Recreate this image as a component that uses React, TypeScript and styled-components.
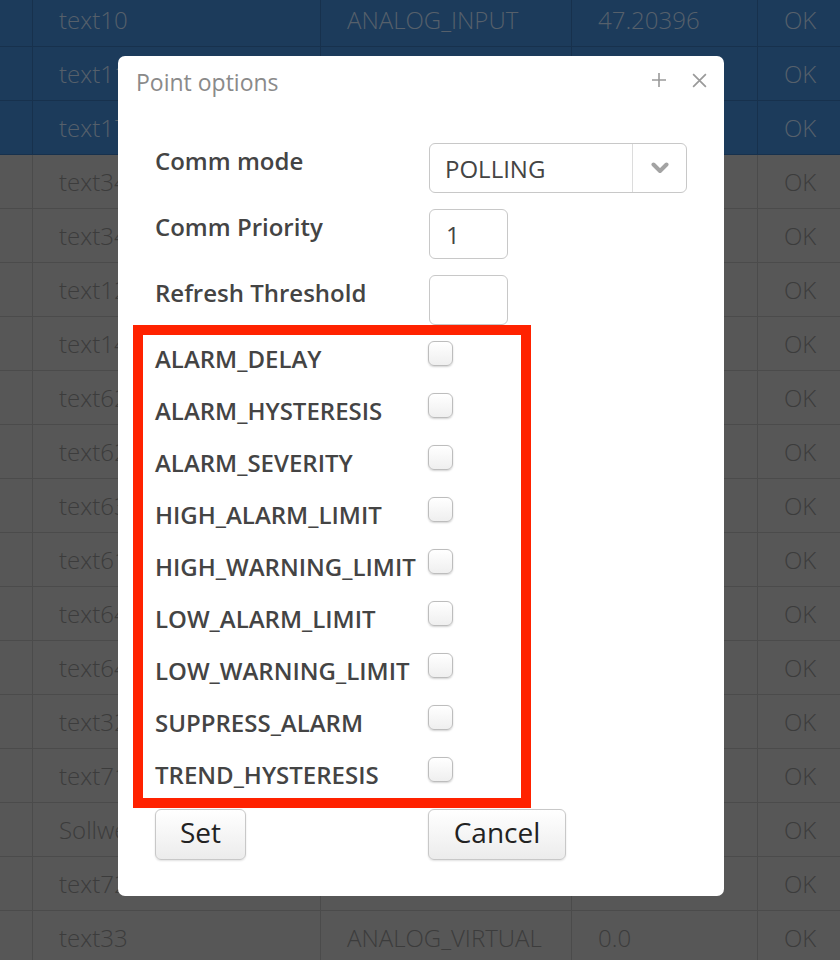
import React from "react";
import styled, { createGlobalStyle } from "styled-components";

const Global = createGlobalStyle`
  html, body { margin: 0; padding: 0; }
  body { width: 840px; height: 960px; overflow: hidden; font-family: "Open Sans", "Liberation Sans", sans-serif; background: #575757; }
`;

const Page = styled.div`
  position: relative;
  width: 840px;
  height: 960px;
  overflow: hidden;
`;

const Table = styled.div`
  display: flex;
  flex-direction: column;
  margin-top: -7px;
`;

const Row = styled.div<{ $sel?: boolean }>`
  display: grid;
  grid-template-columns: 33px 288px 251px 186px 1fr;
  height: 54px;
  background: ${(p) => (p.$sel ? "#1c3b5b" : "#575757")};
  border-bottom: 1px solid ${(p) => (p.$sel ? "#17314d" : "#4b4b4b")};
  box-sizing: border-box;
  color: ${(p) => (p.$sel ? "#56606b" : "#3c3c3c")};
`;

const Cell = styled.div<{ $sel?: boolean }>`
  display: flex;
  align-items: center;
  padding-left: 26px;
  border-right: 1px solid ${(p) => (p.$sel ? "#17314d" : "#4b4b4b")};
  font-size: 24px;
  font-weight: 300;
  white-space: nowrap;
  overflow: hidden;
  &:first-child { padding-left: 0; }
  &:last-child { border-right: none; }
`;

const Dialog = styled.div`
  position: absolute;
  left: 118px;
  top: 56px;
  width: 606px;
  height: 840px;
  background: #fff;
  border-radius: 7px;
  display: flex;
  flex-direction: column;
  box-sizing: border-box;
`;

const TitleBar = styled.div`
  display: flex;
  align-items: center;
  justify-content: space-between;
  height: 52px;
  padding: 0 16px 0 18px;
`;

const Title = styled.div`
  font-size: 23px;
  color: #8a8a8a;
  font-weight: 400;
`;

const TitleIcons = styled.div`
  display: flex;
  gap: 24px;
  align-items: center;
  margin-top: -4px;
`;

const Body = styled.div`
  padding: 35px 37px 0 37px;
  display: flex;
  flex-direction: column;
`;

const FieldRow = styled.div<{ $gap: number }>`
  display: grid;
  grid-template-columns: 274px 1fr;
  margin-bottom: ${(p) => p.$gap}px;
`;

const Label = styled.div`
  font-size: 24px;
  font-weight: 600;
  color: #444;
  line-height: 36px;
  white-space: nowrap;
`;

const SelectBox = styled.div`
  width: 258px;
  height: 50px;
  box-sizing: border-box;
  border: 1.5px solid #c8c8c8;
  border-radius: 6px;
  display: flex;
  align-items: stretch;
`;

const SelectValue = styled.div`
  flex: 1;
  display: flex;
  align-items: center;
  padding-left: 15px;
  font-size: 24px;
  color: #444;
`;

const SelectArrow = styled.div`
  width: 53px;
  border-left: 1.5px solid #dcdcdc;
  display: flex;
  align-items: center;
  justify-content: center;
`;

const TextBox = styled.div`
  width: 79px;
  height: 50px;
  box-sizing: border-box;
  border: 1.5px solid #c8c8c8;
  border-radius: 6px;
  display: flex;
  align-items: center;
  padding-left: 16px;
  font-size: 24px;
  color: #444;
`;

const Group = styled.div`
  margin-left: -22px;
  width: 398px;
  box-sizing: border-box;
  border: 10px solid #ff2200;
  padding: 6px 0 5px 12px;
  display: flex;
  flex-direction: column;
  gap: 16px;
`;

const CheckRow = styled.div`
  display: grid;
  grid-template-columns: 273px 1fr;
  height: 36px;
  align-items: start;
`;

const CheckLabel = styled.div`
  font-size: 24px;
  font-weight: 600;
  color: #444;
  line-height: 36px;
  white-space: nowrap;
`;

const Check = styled.div`
  width: 25px;
  height: 25px;
  box-sizing: border-box;
  border: 1.5px solid #bdbdbd;
  border-radius: 6px;
  background: linear-gradient(#ffffff, #efefef);
  box-shadow: 0 1px 2px rgba(0, 0, 0, 0.18);
`;

const Buttons = styled.div`
  display: grid;
  grid-template-columns: 273px 1fr;
  margin-top: 1px;
`;

const Button = styled.div<{ $w: number }>`
  width: ${(p) => p.$w}px;
  height: 51px;
  box-sizing: border-box;
  border: 1.5px solid #c8c8c8;
  border-radius: 6px;
  background: linear-gradient(#ffffff, #ececec);
  box-shadow: 0 1px 2px rgba(0, 0, 0, 0.12);
  display: flex;
  align-items: center;
  justify-content: center;
  padding-bottom: 5px;
  font-size: 28px;
  color: #222;
`;

const rows: [string, string, string, boolean][] = [
  ["text10", "ANALOG_INPUT", "47.20396", true],
  ["text11", "ANALOG_INPUT", "12.00000", true],
  ["text17", "ANALOG_INPUT", "3.50000", true],
  ["text340", "ANALOG_OUTPUT", "0.0", false],
  ["text341", "ANALOG_OUTPUT", "0.0", false],
  ["text12", "ANALOG_INPUT", "21.5", false],
  ["text14", "ANALOG_INPUT", "18.0", false],
  ["text62", "BINARY_INPUT", "1", false],
  ["text62a", "BINARY_INPUT", "0", false],
  ["text63", "BINARY_INPUT", "0", false],
  ["text61", "BINARY_INPUT", "1", false],
  ["text64", "BINARY_OUTPUT", "0", false],
  ["text64a", "BINARY_OUTPUT", "0", false],
  ["text32", "ANALOG_VALUE", "5.0", false],
  ["text71", "ANALOG_VALUE", "2.0", false],
  ["Sollwert", "ANALOG_VALUE", "20.0", false],
  ["text72", "ANALOG_VIRTUAL", "0.0", false],
  ["text33", "ANALOG_VIRTUAL", "0.0", false],
];

const checks = [
  "ALARM_DELAY",
  "ALARM_HYSTERESIS",
  "ALARM_SEVERITY",
  "HIGH_ALARM_LIMIT",
  "HIGH_WARNING_LIMIT",
  "LOW_ALARM_LIMIT",
  "LOW_WARNING_LIMIT",
  "SUPPRESS_ALARM",
  "TREND_HYSTERESIS",
];

export default function App() {
  return (
    <Page>
      <Global />
      <Table>
        {rows.map(([a, b, c, sel], i) => (
          <Row key={i} $sel={sel}>
            <Cell $sel={sel} />
            <Cell $sel={sel}>{a}</Cell>
            <Cell $sel={sel}>{b}</Cell>
            <Cell $sel={sel}>{c}</Cell>
            <Cell $sel={sel}>OK</Cell>
          </Row>
        ))}
      </Table>
      <Dialog>
        <TitleBar>
          <Title>Point options</Title>
          <TitleIcons>
            <svg width="16" height="16" viewBox="0 0 16 16">
              <path d="M8 1v14M1 8h14" stroke="#9a9a9a" strokeWidth="1.6" fill="none" />
            </svg>
            <svg width="17" height="17" viewBox="0 0 16 16">
              <path d="M2 2l12 12M14 2L2 14" stroke="#9a9a9a" strokeWidth="1.6" fill="none" />
            </svg>
          </TitleIcons>
        </TitleBar>
        <Body>
          <FieldRow $gap={16}>
            <Label>Comm mode</Label>
            <SelectBox>
              <SelectValue>POLLING</SelectValue>
              <SelectArrow>
                <svg width="18" height="12" viewBox="0 0 18 12">
                  <path d="M2.5 2.5L9 9l6.5-6.5" stroke="#a3a3a3" strokeWidth="4" fill="none" strokeLinecap="round" strokeLinejoin="round" />
                </svg>
              </SelectArrow>
            </SelectBox>
          </FieldRow>
          <FieldRow $gap={16}>
            <Label>Comm Priority</Label>
            <TextBox>1</TextBox>
          </FieldRow>
          <FieldRow $gap={0}>
            <Label>Refresh Threshold</Label>
            <TextBox />
          </FieldRow>
          <Group>
            {checks.map((c) => (
              <CheckRow key={c}>
                <CheckLabel>{c}</CheckLabel>
                <Check />
              </CheckRow>
            ))}
          </Group>
          <Buttons>
            <Button $w={91}>Set</Button>
            <Button $w={138}>Cancel</Button>
          </Buttons>
        </Body>
      </Dialog>
    </Page>
  );
}
